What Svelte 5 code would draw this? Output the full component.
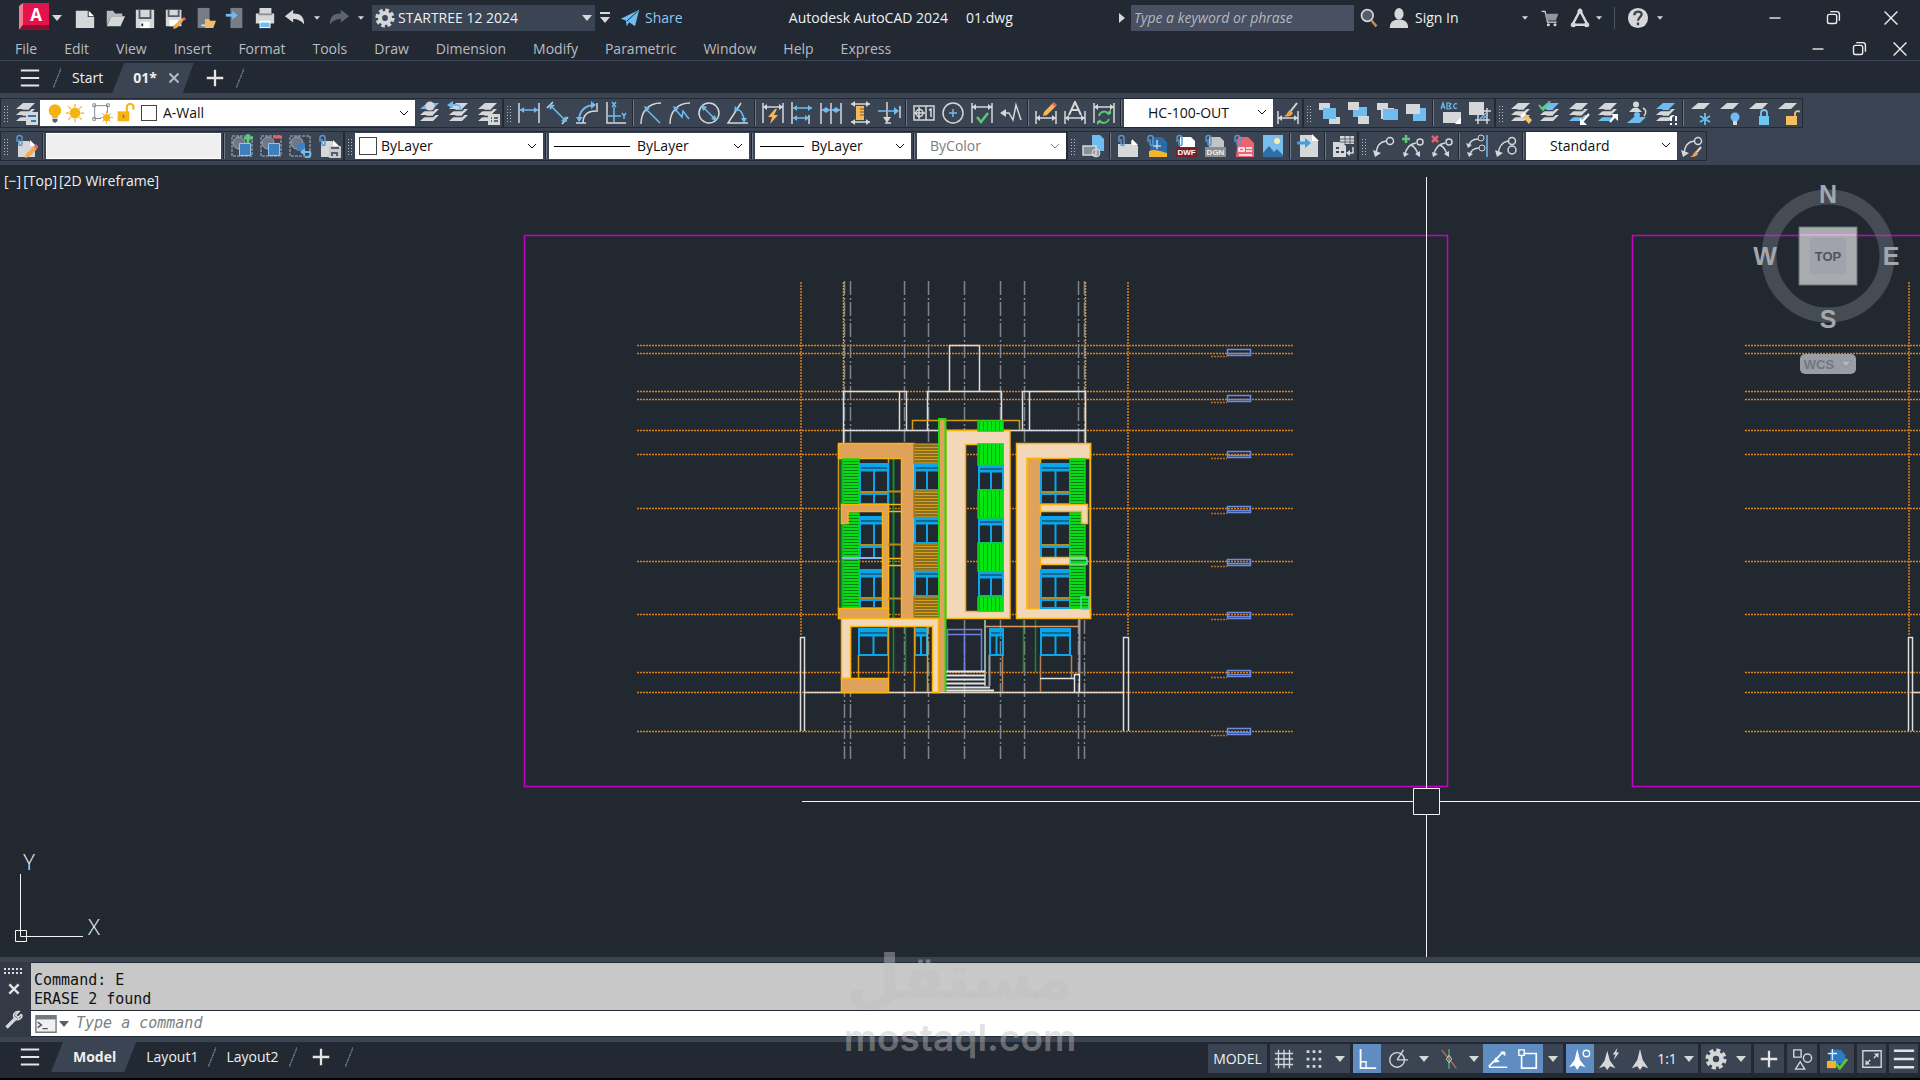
<script>
    const G = '#d6d7d9';
    const B = '#6fbcf0';
    const N = '#5cc878';

    const line = (d, c = G, w = 1.5) => `<path d="${d}" fill="none" stroke="${c}" stroke-width="${w}"/>`;
    const fill = (d, c = G) => `<path d="${d}" fill="${c}"/>`;
    const hArrow = (a, b, y, c = G) =>
        line(`M${a} ${y}H${b}`, c) + fill(`M${a} ${y}l4-3v6zM${b} ${y}l-4-3v6z`, c);
    const sheet = (y, c = G) => fill(`M9 ${y}h12l-6 6H2z`, c);
    const layers = (top = G, mid = G, low = G) => sheet(14, low) + line('M2 15.500h13l6-6', '#3b4453', 1.500) + sheet(8, mid) + line('M2 9.500h13l6-6', '#3b4453', 1.500) + sheet(2, top);
    const page = (c = G) => fill('M4 7h11l6 6v10H4z', c) + fill('M16 6v6h6z', '#fff');
    const clip = line('M3 8V4a2.5 2.5 0 015 0v6a1.500 1.500 0 01-3 0V5', '#5796cf', 1.5);
    const leader = line('M4 20C5 11 8 8 14 7', G, 1.500) + `<circle cx="18" cy="7" r="3.500" fill="none" stroke="${G}" stroke-width="1.500"/>` + fill('M1 16l2 7 6-4z');
    const doubleLeader = line('M4 21C5 14 8 10 15 9M17 21c-1-5-3-8-7-10', G) + `<circle cx="19" cy="8" r="3" fill="none" stroke="${G}" stroke-width="1.500"/>` + fill('M2 18l1 5 5-3zM14 20l5 3v-6z');
    const brush = line('M21 2l-7 9', G, 2) + fill('M14 9l3 3c-2 4-5 4-9 3 3-1 3-4 6-6z', '#eca24a');
    const pencil = fill('M19 2l3 3-9 9-4 1 1-4z', '#f7b952') + fill('M18 3l2-2 3 3-2 2z', '#e8606d');
    const dimFrame = line('M2 2v20M22 2v20') + hArrow(2, 22, 6);
    const dimLow = line('M2 10v13M22 10v13') + hArrow(2, 22, 17);
    const group = `<rect x="2" y="2" width="20" height="20" fill="none" stroke="#aeb4bd" stroke-dasharray="3 1"/><circle cx="9" cy="9" r="6" fill="#6d7889" stroke="#9ba6b5"/>`;
    const innerBlock = fill('M9 9h12v13H9z', '#3f7fbd') + line('M9.500 9.500h11v12h-11z', '#8cc8f2', 1);
    const boxes = (a, b, c) => fill('M2 2h11v7H2z', a) + fill('M6 7h13v11H6z', b) + (c ? fill('M12 16h11v7H12z', c) : '');

    const icons = {
        layerProps: layers() + fill('M12 11h12v13H12z') + line('M14 15h8M17 20h5', '#2f78b4', 2),
        makeCurrent: layers(B) + `<circle cx="12" cy="5" r="4.500" fill="${G}"/>`,
        layerPrev: layers() + line('M3 4h7c3 0 4 2 3 5', B, 2) + fill('M0 4l6-4v8z', B),
        layerStates: layers() + fill('M12 13h12v11H12z') + line('M15 17h1M18 17h4M15 20h1M18 20h4', '#3b4453'),
        dimLinear: line('M2 2v20M22 2v20') + hArrow(3, 21, 9, B),
        dimAligned: line('M1 7l6-6M16 23l6-7') + line('M5 5l14 14', B) + fill('M3 3l6 1-5 5zM21 21l-6-1 5-5z', B),
        dimArc: line('M1 22h10M22 2v9M8 22C8 14 13 10 21 10', G) + line('M4 20C4 10 10 4 20 4', B, 1.800) + fill('M1 16l3 5 4-5zM16 0l5 4-5 4z', B),
        dimOrdinate: line('M3 1v21h19', G) + line('M10 6v15M3 15h14', B) + line('M8 1l4 5M12 1l-4 5M18 12l2 3 2-3M20 15v3', B),
        dimRadius: line('M2 23C2 11 9 2 22 2', G) + line('M7 8l14 14', B, 1.500) + fill('M5 5l6 2-4 4z', B),
        dimJogged: line('M2 23C2 11 9 2 22 2', G) + line('M7 8l7 8 1-6 6 8', B, 1.500) + fill('M5 5l6 2-4 4z', B),
        dimDiameter: `<circle cx="12" cy="12" r="10" fill="none" stroke="${G}" stroke-width="1.500"/>` + line('M6 6l12 12', B) + fill('M4 4l6 2-4 4zM20 20l-6-2 4-4z', B),
        dimAngular: line('M15 2L2 22h20', G) + line('M10 8c6 1 8 6 8 13', B, 1.500) + fill('M9 5l4 4-5 2zM15 17h6l-3 5z', B),
        quickDim: dimFrame + fill('M14 8l-7 8h4l-2 7 8-9h-4l3-6z', '#f5b758'),
        dimBaseline: line('M2 1v22M19 14v9') + hArrow(3, 22, 7, B) + hArrow(3, 19, 17, B),
        dimContinue: line('M2 2v21M12 2v21M22 2v21') + hArrow(3, 11, 9, B) + hArrow(13, 21, 9, B),
        dimSpace: hArrow(3, 22, 3) + hArrow(3, 22, 21) + fill('M8 5h8v14H8z', '#f5b758') + line('M12 8h4M12 11h4M12 14h4', '#6d5737', 1),
        dimBreak: line('M10 1v17M8 22h6M23 5v12') + line('M1 10h20', B) + fill('M17 6l5 4-5 4z', B) + fill('M6 16h8l-4 6z'),
        tolerance: line('M2 5h20v14H2zM14 5v14M17 9l2-1v8M7 6v12M2 12h11') + '<circle cx="7.500" cy="12" r="3.500" fill="none" stroke="#d6d7d9" stroke-width="1.500"/>',
        centerMark: `<circle cx="12" cy="12" r="10" fill="none" stroke="${G}" stroke-width="1.500"/>` + line('M12 8v8M8 12h8', B),
        inspect: dimFrame + line('M7 16l4 5 7-9', N, 2.500),
        jogLine: line('M4 12h6l4 7 3-15 5 15', G) + fill('M1 12l6-4v8z'),
        dimEdit: dimLow + pencil,
        dimTextEdit: dimLow + line('M6 14l6-13 6 13M9 9h6', G, 2),
        dimUpdate: dimFrame + line('M7 15c1-5 8-6 10-1M17 18c-2 5-8 5-10 1', N, 1.800) + fill('M14 13h5v-5zM10 20H5v4z', N),
        dimStyle: dimLow + brush,
        toFront: boxes(G, B, G) + fill('M7 7h12v11H7z', B),
        toBack: fill('M7 6h14v10H7z', B) + fill('M2 1h11v8H2zM12 15h11v8H12z'),
        above: boxes(G, G) + fill('M8 8h15v11H8z', B),
        under: fill('M9 7h13v13H9z', B) + fill('M2 3h14v10H2z'),
        textFront: fill('M4 11h18v11H4z') + fill('M22 16v7h-6z', '#fff') + line('M2 8l2-6 2 6M3 6h3M8 2v6h2l2-1-2-2 2-2-2-1zM18 3c-4-2-5 6 0 4', B, 1.200),
        hatchBack: fill('M1 1h15v13H1z') + line('M10 23V10h13M7 19h15M19 7v16') + line('M12 18l6-6M15 18l3-3', B),
        layerMatch: layers() + fill('M12 14l3-3 8 8-3 4z', '#f3c376') + fill('M11 15l4-4 2 2-4 4z', '#fff'),
        layerCurrent: layers(B) + line('M1 4l4 5 7-9', N, 2),
        layerCopy: layers(G, G, B) + line('M22 13l-7 8', '#fff', 2) + fill('M13 17v7h7z', '#fff'),
        layerWalk: layers(G, G, B) + line('M14 21l6-7', '#fff', 2) + fill('M15 13h7v7z', '#fff'),
        layerIso: sheet(16, B) + `<circle cx="11" cy="3.500" r="3" fill="${G}"/><circle cx="12" cy="14" r="3" fill="${B}"/>` + fill('M4 11h13l-4-4H8z') + line('M18 7c4 2 3 6 1 8'),
        layerMerge: layers(B) + line('M17 15v5M22 15v5M17 22v2M22 22v2', '#fff', 2),
        layerFreeze: sheet(2) + line('M16 12v12M11 15l10 6M21 15l-10 6', B, 1.800),
        layerOff: sheet(2) + `<circle cx="17" cy="16" r="4.500" fill="${B}"/>` + fill('M15 20h4v4h-4z'),
        layerLock: sheet(2) + line('M14 16v-4a3 3 0 016 0v4', '#7ac8ee', 1.800) + fill('M12 15h10v9H12z', '#6cc6ee'),
        layerUnlock: sheet(2) + line('M19 16v-4a3 3 0 015-1', '#f0c178', 1.800) + fill('M10 15h11v9H10z', '#f5be62'),
        attEdit: page() + clip + fill('M20 12l3 3-8 8-4 1 1-4z', '#f3a950') + fill('M20 12l2-2 3 3-2 2z', '#e8606d'),
        groupAdd: group + innerBlock + line('M18 0v9M14 4h9', N, 3),
        groupRemove: group + innerBlock + line('M14 3h9', '#e8606d', 3),
        groupEdit: group + fill('M9 9h8v8H9z', '#3f7fbd') + line('M15 18h7c2 6-3 6-5 5', B, 2) + fill('M12 18l5-4v8z', B),
        groupSave: page() + clip + fill('M12 12h12v12H12z', '#c7c9cc') + line('M14 14h8M15 22v-3h5v3', '#55606f', 2),
        insertBlock: fill('M11 1h8l4 4v12H11z', B) + fill('M2 12h13v9H2z', '#8b9098') + `<circle cx="15" cy="19" r="4" fill="#9aa0a8" stroke="${G}"/>` + line('M2 12h13v9H2z'),
        attach: fill('M2 10h13v-4l7 6v11H2z') + fill('M16 5v6h6z', '#fff') + clip,
        attachImg: fill('M7 3h10l5 5v15H4z', '#2c6ba6') + fill('M4 17c7-3 13 1 18 2v4H4z', '#f4b52b') + line('M8 12h8M12 6v9', '#b8d7ef') + clip,
        attachDwf: fill('M6 3h11l4 4v7H6z', '#fff') + fill('M2 13h21v10H2z', '#7c1d2c') + '<text x="12.500" y="21" font-size="8" font-weight="700" font-family="Liberation Sans, sans-serif" text-anchor="middle" fill="#fff">DWF</text>' + clip,
        attachDgn: fill('M6 3h11l4 4v7H6z', '#c2c4c6') + fill('M2 13h21v10H2z', '#8b8f93') + '<text x="12.500" y="21" font-size="8" font-weight="700" font-family="Liberation Sans, sans-serif" text-anchor="middle" fill="#eee">DGN</text>' + clip,
        attachPdf: fill('M6 3h10l6 6v14H4z', '#ea6370') + line('M7 14h5v3H7zM14 14h6M14 17h6M7 21h13', '#fff') + clip,
        picture: fill('M2 1h20v22H2z', '#79bdea') + fill('M2 19l6-7 5 6 3-3 6 6v2H2z', '#2f6ea6') + '<circle cx="16" cy="7" r="3" fill="#f6eeb0"/>',
        importFile: fill('M4 1h12l6 6v16H4z') + fill('M16 0v7h7z', '#fff') + line('M1 9h9', '#3e9fe3', 3) + fill('M9 4l6 5-6 5z', '#3e9fe3'),
        extract: fill('M2 8h9l4 4v11H2z') + fill('M9 2h14v8H9z') + line('M9 5h14M9 8h14M14 2v8M19 2v8', '#5a6270', 1) + line('M5 14h3M5 18h3M10 18h3', '#3b4453', 2) + line('M22 13v6h-5') + fill('M15 19l4-3v6z'),
        leader,
        leaderAdd: doubleLeader + line('M5 1v8M1 5h8', N, 2.500),
        leaderRemove: doubleLeader + line('M2 2l6 6M8 2l-6 6', '#e8606d', 2.500),
        leaderAlign: line('M4 12c1-5 4-7 9-7M5 21c1-5 4-7 9-7') + '<circle cx="16" cy="4" r="3" fill="none" stroke="#d6d7d9"/><circle cx="17" cy="14" r="3" fill="none" stroke="#d6d7d9"/>' + fill('M1 9l2 5 4-3zM2 18l2 5 4-3z') + line('M22 1v22', B),
        leaderCollect: line('M4 20c1-8 4-12 10-13') + '<circle cx="18" cy="7" r="3.500" fill="none" stroke="#d6d7d9" stroke-width="1.500"/><circle cx="18" cy="16" r="4" fill="none" stroke="#d6d7d9" stroke-width="1.500"/>' + fill('M1 16l2 7 6-4z'),
        leaderStyle: leader + line('M21 13l-5 6', G, 2) + fill('M16 17l2 3c-2 3-5 3-8 3 3-1 3-4 6-6z', '#eca24a'),
        newFile: fill('M2 4h13v7h7v12H2z') + fill('M16 4l6 6h-6z', '#fff'),
        open: fill('M3 4h7l2 3h8v3H8L3 20z', '#b8babc') + fill('M8 10h15l-5 11H3z'),
        save: fill('M2 3h20v20H2z') + line('M6 3v9h12V3', '#555d69', 2) + fill('M7 16h10v7H7z', '#fff') + line('M9 18v3', '#222933', 2),
        saveAs: fill('M2 3h17v18H2z') + line('M5 3v7h11V3', '#555d69', 2) + fill('M6 14h9v7H6z', '#fff') + fill('M20 12l2 2-8 9-4 1 1-4z', '#f3a950') + fill('M20 12l2-1 2 2-2 2z', '#e8606d'),
        webOpen: fill('M4 1h13v22H4z', '#777d85') + line('M8 20h4', '#ddd', 2) + fill('M12 13h4l2 2h6l-3 8h-9z', '#f0bc68'),
        webSave: fill('M7 1h13v22H7z', '#777d85') + line('M2 9h9', B, 3) + fill('M9 4l6 5-6 5z', B),
        print: fill('M6 1h13v6h3v11H2V7h4z') + line('M5 8h15', '#8b9096', 2) + fill('M6 15h12v8H6z', '#fff') + fill('M7 17h10v5H7z', B),
        undo: fill('M1 10l9-7v4c8 0 12 3 12 12-3-4-7-6-12-6v4z'),
        redo: fill('M23 10l-9-7v4C6 7 2 10 2 19c3-4 7-6 12-6v4z', '#5d646e'),
        gear: '<circle cx="12" cy="12" r="6" fill="none" stroke="#d6d7d9" stroke-width="5"/><circle cx="12" cy="12" r="9.500" fill="none" stroke="#d6d7d9" stroke-width="4" stroke-dasharray="4.400 3.060"/>',
        share: fill('M1 13L23 2l-5 20-7-5-3 5-1-7z', B) + line('M8 16L21 4', '#222933', 1.200),
        search: '<circle cx="10" cy="9" r="7" fill="#565e6b" stroke="#d6d7d9" stroke-width="2"/>' + line('M15 15l6 7', '#c98b54', 3),
        user: '<ellipse cx="12" cy="7.500" rx="5" ry="6.500" fill="#d6d7d9"/>' + fill('M2 23c0-7 4-8 7-9h6c3 1 7 2 7 9z'),
        cart: line('M2 4h4l3 13h11', G, 1.500) + fill('M6 7h16l-3 8H8z', '#8f959d') + '<circle cx="10" cy="20" r="1.800" fill="#d6d7d9"/><circle cx="18" cy="20" r="1.800" fill="#d6d7d9"/>',
        apps: line('M12 3L3 20h18z', G, 3) + '<circle cx="12" cy="4" r="3" fill="#d6d7d9"/><circle cx="4" cy="20" r="3" fill="#d6d7d9"/><circle cx="20" cy="20" r="3" fill="#d6d7d9"/>',
        help: '<circle cx="12" cy="12" r="11" fill="#d6d7d9"/>' + line('M8 9c0-5 8-5 8-1 0 3-4 3-4 7M12 17v3', '#3a424e', 2.500),
        min: line('M6 12h12', '#eee'),
        restore: '<rect x="6" y="8" width="10" height="10" rx="2" fill="none" stroke="#eee" stroke-width="1.500"/>' + line('M9 5h7c2 0 3 1 3 3v7', '#eee'),
        close: line('M5 5l14 14M19 5L5 19', '#eee'),
        menu: line('M1 3h22M1 12h22M1 21h22', '#e4e4e4', 2.500),
        plus: line('M12 3v18M3 12h18', '#e4e4e4', 2.500),
        bulb: '<circle cx="12" cy="9" r="7.500" fill="#f6b414"/>' + fill('M8 14h8l-1 4H9z', '#f6b414') + fill('M9 19h6v3l-3 2-3-2z', '#596170'),
        sun: '<circle cx="12" cy="12" r="6.500" fill="#f6b414"/>' + line('M12 1v4M12 19v4M1 12h4M19 12h4M4 4l3 3M17 17l3 3M20 4l-3 3M7 17l-3 3', '#f6b414', 1.500),
        vpFreeze: line('M4 4h14v8M4 4v14h7M2 2h3v3H2zM17 2h3v3h-3zM2 17h3v3H2z', '#7c828a', 1) + '<circle cx="17" cy="17" r="4" fill="#f6b414"/>' + line('M17 10v14M10 17h14M12 12l10 10M22 12L12 22', '#f6b414', 1),
        unlock: line('M13 11V5a4 4 0 018 0v3', '#f6b414', 2.500) + fill('M2 10h14v12H2z', '#f6b414') + line('M9 14v4', '#a97400', 2),
        grid: line('M6 2v20M12 2v20M18 2v20M2 6h20M2 12h20M2 18h20', G),
        snap: line('M4 4h16M4 12h16M4 20h16', G, 3).replace('/>', ' stroke-dasharray="3 3.500"/>'),
        ortho: line('M5 1v21h17', '#fff', 2) + line('M5 15h6v7', '#fff'),
        polar: '<circle cx="11" cy="13" r="8" fill="none" stroke="#d6d7d9" stroke-width="1.500"/>' + line('M11 13h12M11 13l7-11'),
        iso: line('M4 2l16 20', '#c26d54') + line('M12 1v22', '#52ad68') + line('M12 8l-3 4 3 4 3-4z', G, 1),
        otrack: line('M2 21h20M2 20L18 4', '#fff', 1.800) + fill('M9 10l5 5-6 1zM14 4h6v5z', '#fff'),
        osnap: line('M7 6h14v16H5V8', '#fff', 1.800) + line('M2 2h6v6H2z', '#fff'),
        annoVis: fill('M9 1l3 12 6 8-6-2-3 5-3-5-6 2 6-8z', '#fff') + '<circle cx="19" cy="6" r="3.500" fill="none" stroke="#fff" stroke-width="1.500"/>',
        annoAuto: fill('M9 3l3 11 6 8-6-2-3 4-3-4-6 2 6-8z') + fill('M20 0l-5 7h3l-2 6 6-8h-3z'),
        anno: fill('M12 1l3 12 6 9-6-2-3 4-3-4-6 2 6-9z'),
        isolate: line('M3 2h8v8H3zM10 15l5 8H5z') + '<circle cx="18" cy="11" r="4.500" fill="none" stroke="#d6d7d9" stroke-width="1.500"/>',
        hardware: fill('M5 2h11l5 6v9H4z', '#2e7cc0') + fill('M1 14h10v8H1z', '#f2b134') + line('M7 1v12M2 6h10', '#d9ecfa') + line('M11 17l4 5 8-10', '#5cc83f', 3),
        cleanScreen: line('M2 3h20v18H2zM5 18l5-5M14 11l5-5') + fill('M5 13v5h5zM14 6h5v5z'),
        wrench: line('M3 21L15 9', G, 4) + line('M21 5l-4 4-3-3 4-4c-6-1-8 5-5 8s10 1 8-5', G, 2),
        cmdX: line('M4 4l16 16M20 4L4 20', '#e4e4e4', 4),
        prompt: fill('M1 3h22v18H1z', '#f0f0f0') + line('M1 3h22v18H1z', '#75797e', 1.500) + fill('M1 3h22v4H1z', '#75797e') + line('M3 10l4 3-4 3M8 17h6', '#55595e'),
    };

    const menus = ['File', 'Edit', 'View', 'Insert', 'Format', 'Tools', 'Draw', 'Dimension', 'Modify', 'Parametric', 'Window', 'Help', 'Express'];

    // '|' is a separator, objects are combo boxes
    const rows = [
        [
            ['layerProps', { value: 'A-Wall', width: 375, kind: 'layer' }, 'makeCurrent', 'layerPrev', 'layerStates'],
            ['dimLinear', 'dimAligned', 'dimArc', 'dimOrdinate', '|', 'dimRadius', 'dimJogged', 'dimDiameter', 'dimAngular', '|', 'quickDim', 'dimBaseline', 'dimContinue', 'dimSpace', 'dimBreak', '|', 'tolerance', 'centerMark', 'inspect', 'jogLine', '|', 'dimEdit', 'dimTextEdit', 'dimUpdate', '|', { value: 'HC-100-OUT', width: 149, kind: 'style' }, 'dimStyle'],
            ['toFront', 'toBack', 'above', 'under', '|', 'textFront', 'hatchBack'],
            ['layerMatch', 'layerCurrent', 'layerCopy', 'layerWalk', 'layerIso', 'layerMerge', '|', 'layerFreeze', 'layerOff', 'layerLock', 'layerUnlock'],
        ],
        [
            ['attEdit', '|', { value: '', width: 175, kind: 'text' }, '|', 'groupAdd', 'groupRemove', 'groupEdit', 'groupSave'],
            [{ value: 'ByLayer', width: 188, kind: 'color' }, '|', { value: 'ByLayer', width: 200, kind: 'line', sample: 76 }, '|', { value: 'ByLayer', width: 156, kind: 'line', sample: 44 }, '|', { value: 'ByColor', width: 149, kind: 'plot' }],
            ['insertBlock', '|', 'attach', 'attachImg', 'attachDwf', 'attachDgn', 'attachPdf', 'picture', '|', 'importFile', '|', 'extract'],
            ['leader', 'leaderAdd', 'leaderRemove', '|', 'leaderAlign', 'leaderCollect', '|', { value: 'Standard', width: 151, kind: 'style' }, 'leaderStyle'],
        ],
    ];

    const status = [
        [{ text: 'MODEL', w: 59 }],
        [{ icon: 'grid', w: 28 }, { icon: 'snap', w: 32 }, { arrow: true, w: 20 }],
        [{ icon: 'ortho', w: 28, on: true }, { icon: 'polar', w: 34 }, { arrow: true, w: 18 }, { icon: 'iso', w: 32 }, { arrow: true, w: 18 }, { icon: 'otrack', w: 30, on: true }, { icon: 'osnap', w: 30, on: true }, { arrow: true, w: 20 }],
        [{ icon: 'annoVis', w: 28, on: true }, { icon: 'annoAuto', w: 32 }, { icon: 'anno', w: 28 }, { text: '1:1', w: 26 }, { arrow: true, w: 18 }],
        [{ icon: 'gear', w: 30 }, { arrow: true, w: 20 }],
        [{ icon: 'plus', w: 30 }],
        [{ icon: 'isolate', w: 30 }],
        [{ icon: 'hardware', w: 34 }],
        [{ icon: 'cleanScreen', w: 29 }],
        [{ icon: 'menu', w: 29 }],
    ];

    const levels = [345.5, 353.5, 391.5, 399.5, 430.5, 454.5, 508.5, 561.5, 614.5, 672.5, 692.5, 731.5];
    const marks = [349, 395, 451, 506, 559, 612, 670, 728];
    const axes = [844.5, 850.5, 904.5, 928.5, 964.5, 1000.5, 1024.5, 1078.5, 1084.5];
    const windows = [
        [860, 464, 28, 40], [860, 517, 28, 41], [860, 570, 28, 38],
        [915, 464, 24, 26], [915, 517, 24, 26], [915, 570, 24, 26],
        [979, 465, 24, 25], [979, 518, 24, 25], [979, 571, 24, 25],
        [1041, 464, 29, 40], [1041, 517, 29, 41], [1041, 570, 29, 38],
        [859, 629, 29, 26], [915, 629, 12, 26], [990, 629, 13, 26], [1041, 629, 29, 26],
    ];
    const hatches = [
        [843, 459, 16, 46, 'louver'], [843, 513, 16, 95, 'louver'],
        [1070, 459, 15, 46, 'louver'], [1070, 513, 15, 95, 'louver'],
        [914, 444, 25, 19, 'brick'], [914, 491, 25, 26, 'brick'], [914, 544, 25, 26, 'brick'], [914, 597, 25, 21, 'brick'],
        [978, 421, 25, 10, 'fin'], [978, 444, 25, 21, 'fin'], [978, 490, 25, 28, 'fin'], [978, 543, 25, 28, 'fin'], [978, 597, 25, 14, 'fin'],
    ];

    let command = $state('');
    let search = $state('');
</script>

{#snippet icon(name, size = 24)}
    <svg width={size} height={size} viewBox="0 0 24 24" aria-hidden="true">{@html icons[name]}</svg>
{/snippet}

{#snippet arrow()}
    <svg width="10" height="6" viewBox="0 0 10 6" aria-hidden="true"><path d="M0 0h10L5 6z" fill="#d6d7d9" /></svg>
{/snippet}

{#snippet combo(c)}
    {#if c.kind === 'text'}
        <input class="group-name" style="width: {c.width}px" aria-label="Group name" />
    {:else}
        <span class="combo {c.kind}" style="width: {c.width}px">
            {#if c.kind === 'layer'}
                {@render icon('bulb', 20)}{@render icon('sun', 20)}
                <span class="vp">{@render icon('vpFreeze', 22)}</span>{@render icon('unlock', 20)}
            {/if}
            {#if c.kind === 'layer' || c.kind === 'color'}<span class="swatch"></span>{/if}
            {#if c.kind === 'line'}<span class="sample" style="width: {c.sample}px"></span>{/if}
            <select aria-label={c.value} disabled={c.kind === 'plot'}>
                <option>{c.value}</option>
            </select>
            <svg class="chevron" width="10" height="6" viewBox="0 0 10 6"><path d="M1 1l4 4 4-4" fill="none" stroke="currentColor" /></svg>
        </span>
    {/if}
{/snippet}

<div class="app">
    <header class="title-bar">
        <div class="quick">
            <button class="logo" aria-label="AutoCAD">
                <svg width="30" height="29" viewBox="0 0 30 29">
                    <path d="M0 3l4-3v22l-4 5z" fill="#f0808f" />
                    <path d="M4 0h26v23H4z" fill="#e5134b" />
                    <path d="M4 22h26v5H0z" fill="#8e0d2d" />
                    <text x="17" y="18" text-anchor="middle" font-size="17" font-weight="700" fill="#fff">A</text>
                </svg>
            </button>
            <button class="drop" aria-label="Application menu">{@render arrow()}</button>
            <span class="spacer"></span>
            {#each ['newFile', 'open', 'save', 'saveAs', 'webOpen', 'webSave', 'print', 'undo'] as name}
                <button class="tb" aria-label={name}>{@render icon(name, 22)}</button>
            {/each}
            <button class="drop small" aria-label="Undo list">{@render arrow()}</button>
            <button class="tb" aria-label="redo">{@render icon('redo', 22)}</button>
            <button class="drop small" aria-label="Redo list">{@render arrow()}</button>
            <label class="workspace">
                {@render icon('gear', 20)}
                <select aria-label="Workspace"><option>STARTREE 12 2024</option></select>
                {@render arrow()}
            </label>
            <button class="customize" aria-label="Customize"><svg width="10" height="11" viewBox="0 0 10 11"><path d="M0 0h10v2H0zM0 5h10l-5 6z" fill="#d6d7d9" /></svg></button>
            <button class="share">{@render icon('share', 20)}<span>Share</span></button>
        </div>
        <div class="doc-title"><span>Autodesk AutoCAD 2024</span><span>01.dwg</span></div>
        <div class="info">
            <svg class="expand" width="6" height="10" viewBox="0 0 6 10"><path d="M0 0l6 5-6 5z" fill="#d6d7d9" /></svg>
            <input class="search" placeholder="Type a keyword or phrase" aria-label="Search" bind:value={search} />
            <button class="tb" aria-label="Search">{@render icon('search', 20)}</button>
            <button class="signin">{@render icon('user', 22)}<span>Sign In</span></button>
            <button class="drop small" aria-label="Account">{@render arrow()}</button>
            <button class="tb cart" aria-label="Cart">{@render icon('cart', 20)}</button>
            <button class="tb apps" aria-label="Apps">{@render icon('apps', 20)}</button>
            <button class="drop small" aria-label="Apps list">{@render arrow()}</button>
            <span class="rule"></span>
            <button class="tb" aria-label="Help">{@render icon('help', 22)}</button>
            <button class="drop small" aria-label="Help list">{@render arrow()}</button>
            <div class="win">
                {#each ['min', 'restore', 'close'] as name}
                    <button aria-label={name}>{@render icon(name, 22)}</button>
                {/each}
            </div>
        </div>
    </header>

    <nav class="menu-bar">
        {#each menus as m}
            <button>{m}</button>
        {/each}
        <div class="doc-win">
            {#each ['min', 'restore', 'close'] as name}
                <button aria-label={name}>{@render icon(name, 22)}</button>
            {/each}
        </div>
    </nav>

    <div class="file-tabs">
        <button class="burger" aria-label="File tabs">{@render icon('menu', 20)}</button>
        <span class="slash"></span>
        <button class="tab">Start</button>
        <div class="tab current">
            <button>01*</button>
            <button class="x" aria-label="Close drawing"><svg width="12" height="12" viewBox="0 0 24 24">{@html line('M3 3l18 18M21 3L3 21', '#b5bac1', 4)}</svg></button>
        </div>
        <button class="add" aria-label="New drawing">{@render icon('plus', 22)}</button>
        <span class="slash"></span>
    </div>

    <div class="toolbars">
        {#each rows as row}
            <div class="row">
                {#each row as panel}
                    <div class="panel" role="toolbar">
                        <span class="grip"></span>
                        {#each panel as item}
                            {#if item === '|'}
                                <span class="sep"></span>
                            {:else if typeof item === 'string'}
                                <button class="tool" aria-label={item}>{@render icon(item)}</button>
                            {:else}
                                {@render combo(item)}
                            {/if}
                        {/each}
                    </div>
                {/each}
            </div>
        {/each}
    </div>

    <main class="canvas">
        <div class="view-label"><button>[−]</button><button>[Top]</button><button>[2D Wireframe]</button></div>
        <svg class="drawing" width="100%" height="100%" aria-label="Elevation drawing">
            <defs>
                <pattern id="louver" width="16" height="3" patternUnits="userSpaceOnUse">
                    <rect width="16" height="3" fill="#0a7a1c" /><rect width="16" height="2" fill="#08dc16" />
                </pattern>
                <pattern id="fin" width="4" height="12" patternUnits="userSpaceOnUse">
                    <rect width="4" height="12" fill="#0ba41a" /><rect width="3" height="12" fill="#06e612" />
                </pattern>
                <pattern id="brick" width="12" height="3" patternUnits="userSpaceOnUse">
                    <rect width="12" height="3" fill="#8a6d22" /><rect width="12" height="1" fill="#d9a010" />
                </pattern>
            </defs>
            <g transform="translate(0 -165)">
                <g id="elevation" fill="none" stroke-width="1.5">
                    <rect x="524.5" y="235.5" width="923" height="551" stroke="#c500c5" />
                    <g stroke="#e07f16" stroke-dasharray="2 1">
                        {#each levels as y}
                            <path d="M637 {y}H1293" />
                        {/each}
                        <path d="M801 282V635M1128 282V635" />
                    </g>
                    {#each marks as y}
                        <path d="M1211 {y + 7}.5h16" stroke="#b96c1c" stroke-dasharray="2 1" />
                        <path d="M1227.500 {y}.5h23v6h-23zM1227 {y + 4}.5h24" stroke="#6a8be0" />
                    {/each}
                    <g stroke="#80848a" stroke-dasharray="14 3 2 2">
                        {#each axes as x}
                            <path d="M{x} 281V443M{x} 620V759" />
                        {/each}
                    </g>
                    <path d="M843.500 282V391M1085.500 282V443" stroke="#d99a22" stroke-dasharray="2 1" />

                    <g stroke="#dcdcdc">
                        <path d="M949.500 391V345.500h30V391M843.500 443V391.500h63v39M899.500 391v39M927.500 430V391.500h74V430M1022.500 430V391.500h63V443M1029.500 391v39M843 430.500h243" />
                        <path d="M805 692.500H1123" stroke="#e8d6c4" />
                        <path d="M800.500 731V637.500h4V731M1123.500 731V637.500h5V731" />
                    </g>
                    <path d="M912.500 430V420.500h107V430" stroke="#d69c12" />

                    <!-- left block -->
                    <path d="M838.500 443.500V609M888.500 459V504" stroke="#d69c12" />
                    <path d="M893.500 459V618M841.500 459V609" stroke="#178a2a" stroke-width="2" />
                    <path d="M838.500 443.500H914.500V618.500H901.500V458.500H838.500z" fill="#e0a15a" stroke="#fbb40c" />
                    <path d="M1041 458h49V609h-49" stroke="#d79b16" />

                    <!-- centre block -->
                    <path d="M946 430.500h64v188h-64zM965.500 444.500v167h37.500v-167z" fill="#f2d8b8" fill-rule="evenodd" stroke="#fbb40c" />
                    <!-- right block -->
                    <path d="M1016.500 443.500h74v15H1027v150h63.500v10h-74z" fill="#f2d8b8" stroke="#fbb40c" />
                    <path d="M1027.500 458.500h13v150h-13z" fill="#e0a15a" stroke="#fbb40c" />

                    {#each windows as [x, y, w, h]}
                        <g stroke="#0aa5ea">
                            <rect {x} {y} width={w} height={h} stroke-width="2" />
                            <path d="M{x} {y + 2}h{w}M{x} {y + 6}h{w}" stroke-width="3" />
                            <path d="M{x + w / 2} {y + 7}v{h - 7}" stroke-width="2" />
                            {#if h > 30}<path d="M{x} {y + 30}h{w}" stroke-width="2" />{/if}
                        </g>
                        {#if h > 30}
                            <path d="M{x} {y + 28}h{w}" stroke="#b98a16" stroke-width="2" />
                        {/if}
                    {/each}
                    {#each hatches as [x, y, w, h, p]}
                        <rect {x} {y} width={w} height={h} fill="url(#{p})" stroke={p === 'brick' ? '#a5811c' : '#0cd41a'} />
                    {/each}

                    <g fill="#e0a15a" stroke="#fbb40c">
                        <path d="M841.500 504.500h47v104h-6v-97h-34.500v12h-6.500z" />
                        <path d="M838.500 608.500h50v10h-50z" />
                        <path d="M888 504.500h13M888 511.500h13M888 558.500h13M888 565.500h13" />
                    </g>
                    <path d="M842 558h40" stroke="#8db6e8" stroke-width="2" />
                    <path d="M888 491.500h13M888 544.500h13M888 598.500h13" stroke="#b98a16" stroke-width="2" />
                    <g fill="#f2d8b8" stroke="#fbb40c">
                        <path d="M1040.500 504.500h47v19h-6v-12h-41z" />
                        <path d="M1040.500 557.500h46v7h-46z" />
                    </g>
                    <path d="M1070 559h17v5h-17zM1081 597h8v12h-8z" fill="url(#louver)" stroke="#4ae0a0" />
                    <path d="M1090.500 443V618.500" stroke="#fbb40c" />

                    <!-- ground floor -->
                    <path d="M858.500 655V678M888.500 655V678M914.500 618V692M927.500 618V692M888.500 626V655" stroke="#d69c12" />
                    <path d="M893.500 626V672M905.500 626V672M1023.500 620V672M1035.500 620V672" stroke="#178a2a" />
                    <path d="M989.500 655V686M1079.500 619V674" stroke="#9b9ea3" stroke-width="2" />
                    <path d="M985 620V686" stroke="#86ab96" stroke-width="2" />
                    <path d="M1002.500 655V692M1040.500 655V692M1071.500 655V678" stroke="#b98058" />
                    <path d="M985 626.500h94" stroke="#e2965c" />
                    <path d="M947.500 672V629.500h34V672M947 634.500h34M964.500 634V672" stroke="#6f7fe0" />
                    <path d="M945 671.500h40M945 675.500h40M945 679.500h40M945 683.500h40M945 687.500h45M945 690.500h49" stroke="#e4e4e4" stroke-width="2" />
                    <path d="M1040 678.500h34M1074.500 692V674.500h5V692" stroke="#e4e4e4" />
                    <path d="M841.500 618.500h97v74h-6v-66h-82v52h-9z" fill="#f2d8b8" stroke="#fbb40c" />
                    <path d="M841.500 678.500h47v14h-47z" fill="#e0a15a" stroke="#fbb40c" />
                    <path d="M939 419h6.500v273H939z" fill="#e0a15a" />
                    <path d="M939 618V419h6.500V692" stroke="#1ddd12" stroke-width="2" />
                </g>
                <use href="#elevation" x="1108" />

                <!-- crosshair -->
                <path d="M1426.500 177V788M1426.500 814V957M802 801.500H1413M1440 801.500H4000M1413.500 788.500h26v26h-26z" fill="none" stroke="#f2f2f2" />

                <!-- UCS -->
                <path d="M20.500 874V936.500H83M15.500 930.500h11v11h-11z" fill="none" stroke="#f2f2f2" />
                <text x="29" y="870" class="ucs">Y</text>
                <text x="94" y="935" class="ucs">X</text>
            </g>
        </svg>
        <div class="cube">
            <svg width="150" height="150" viewBox="0 0 150 150">
                <circle cx="75" cy="75" r="59" fill="none" stroke="#7b828a" stroke-opacity=".4" stroke-width="15" />
                <rect x="46" y="46" width="58" height="58" fill="#a9acaf" stroke="#6d7176" />
                <path d="M47 54h56" stroke="#dba9dc" stroke-width="2" />
                <rect x="57" y="57" width="36" height="36" fill="#a0a3ab" />
                <text x="75" y="80" class="face">TOP</text>
                <text x="75" y="22" class="dir">N</text>
                <text x="75" y="147" class="dir">S</text>
                <text x="12" y="84" class="dir">W</text>
                <text x="138" y="84" class="dir">E</text>
            </svg>
            <button class="wcs">WCS <svg width="12" height="8" viewBox="0 0 12 8"><path d="M1 1h10L6 7z" fill="#b5b8be" stroke="#8e929a" /></svg></button>
        </div>
    </main>

    <section class="command">
        <div class="handle">
            <span class="dots"></span>
            <button aria-label="Close command line">{@render icon('cmdX', 14)}</button>
            <button aria-label="Customize">{@render icon('wrench', 20)}</button>
        </div>
        <div class="lines">
            <pre>Command: E
ERASE 2 found</pre>
            <div class="prompt">
                {@render icon('prompt', 22)}
                <svg width="10" height="6" viewBox="0 0 10 6"><path d="M0 0h10L5 6z" fill="#5b6068" /></svg>
                <input placeholder="Type a command" aria-label="Command" bind:value={command} />
            </div>
        </div>
        <div class="watermark" aria-hidden="true">
            <span class="ar" lang="ar">مستقل</span>
            <span class="en">mostaql.com</span>
        </div>
    </section>

    <footer class="status-bar">
        <button class="burger" aria-label="Layouts">{@render icon('menu', 20)}</button>
        <button class="layout current">Model</button>
        <button class="layout">Layout1</button>
        <span class="slash"></span>
        <button class="layout">Layout2</button>
        <span class="slash"></span>
        <button class="add" aria-label="New layout">{@render icon('plus', 22)}</button>
        <span class="slash"></span>
        <div class="toggles">
            {#each status as group}
                <div class="cluster">
                    {#each group as s}
                        <button class:on={s.on} style="width: {s.w}px" aria-label={s.icon ?? s.text ?? 'More'}>
                            {#if s.icon}{@render icon(s.icon, 22)}{:else if s.arrow}{@render arrow()}{:else}{s.text}{/if}
                        </button>
                    {/each}
                </div>
            {/each}
        </div>
    </footer>
</div>

<style>
    :global(body) {
        background: #000;
    }

    .app {
        display: flex;
        flex-direction: column;
        height: 100vh;
        overflow: hidden;
        background: #222933;
        color: #f0f0f0;
        font: 14px/20px "Open Sans", "Noto Sans", sans-serif;
    }

    button, select, input {
        font: inherit;
        color: inherit;
        background: none;
        border: 0;
        padding: 0;
        margin: 0;
        box-sizing: border-box;
        border-radius: 0;
    }

    button {
        display: flex;
        align-items: center;
        justify-content: center;
        flex: none;
        white-space: nowrap;
    }

    select {
        appearance: none;
        flex: 1;
        min-width: 0;
        outline: 0;
        opacity: 1;
    }

    svg {
        flex: none;
        display: block;
    }

    /* title bar */
    .title-bar {
        display: flex;
        justify-content: space-between;
        align-items: center;
        height: 35px;
        flex: none;
        padding-left: 19px;
    }

    .quick, .info, .doc-title, .win {
        display: flex;
        align-items: center;
    }

    .tb {
        width: 30px;
        height: 30px;
    }

    .drop {
        width: 16px;
        height: 24px;
    }

    .small {
        width: 14px;
    }

    .small svg {
        width: 6px;
    }

    .spacer {
        width: 5px;
    }

    .workspace {
        display: flex;
        align-items: center;
        width: 223px;
        height: 26px;
        margin-left: 4px;
        padding: 0 3px;
        gap: 3px;
        box-sizing: border-box;
        background: #3b4453;
    }

    .customize {
        width: 20px;
        height: 24px;
    }

    .share {
        gap: 5px;
        margin-left: 5px;
        color: #8cc8f2;
    }

    .doc-title {
        gap: 18px;
        white-space: nowrap;
    }

    .search {
        width: 223px;
        height: 26px;
        margin-left: 6px;
        padding: 0 3px;
        background: #485062;
    }

    .search::placeholder {
        color: #b4b8bf;
        font-style: italic;
        opacity: 1;
    }

    .signin {
        width: 134px;
        padding-left: 4px;
        gap: 5px;
        justify-content: flex-start;
    }

    .cart {
        width: 36px;
    }

    .apps {
        width: 24px;
    }

    .rule {
        width: 1px;
        height: 22px;
        margin: 0 8px;
        background: #4b5462;
    }

    .win {
        margin-left: 79px;
    }

    .win button {
        width: 58px;
        height: 30px;
    }

    /* menu bar */
    .menu-bar {
        display: flex;
        align-items: center;
        gap: 1px;
        height: 26px;
        box-sizing: border-box;
        flex: none;
        padding: 2px 0 0 2px;
        border-bottom: 1px solid #3b4453;
        color: #b9bcc1;
    }

    .menu-bar > button {
        padding: 0 13px;
    }

    .doc-win {
        display: flex;
        margin-left: auto;
    }

    .doc-win button {
        width: 41px;
    }

    /* file tabs */
    .file-tabs, .status-bar {
        display: flex;
        align-items: center;
        flex: none;
    }

    .file-tabs {
        height: 32px;
        box-sizing: border-box;
        padding-top: 2px;
    }

    .burger {
        width: 30px;
        margin-left: 15px;
    }

    .slash {
        width: 8px;
        height: 20px;
        background: linear-gradient(112deg, transparent 46%, #566070 46%, #566070 56%, transparent 56%);
    }

    .file-tabs > .slash {
        margin-left: 8px;
    }

    .file-tabs > .slash:last-child {
        margin-left: 0;
    }

    .tab {
        padding: 0 9px 0 11px;
    }

    .tab.current {
        display: flex;
        align-items: center;
        height: 30px;
        align-self: flex-end;
        padding: 0 14px 0 21px;
        gap: 11px;
        font-weight: 700;
        background: #3b4453;
        clip-path: polygon(12px 0, 100% 0, calc(100% - 11px) 100%, 0 100%);
    }

    .add {
        width: 42px;
    }

    /* toolbars */
    .toolbars {
        display: flex;
        flex-direction: column;
        gap: 3px;
        padding: 5px 0 4px;
        flex: none;
        background: #3b4453;
    }

    .row {
        display: flex;
    }

    .panel {
        display: flex;
        align-items: center;
        height: 30px;
        box-sizing: border-box;
        border: 1px solid #232a34;
    }

    .grip {
        width: 10px;
        height: 18px;
        background: repeating-linear-gradient(#3b4453 0 2px, transparent 2px 3px), linear-gradient(90deg, transparent 3px, #b6bbc4 3px 4px, transparent 4px 6px, #b6bbc4 6px 7px, transparent 7px);
    }

    .tool {
        width: 29px;
        height: 28px;
    }

    .sep {
        width: 2px;
        height: 26px;
        margin: 0 2px;
        box-sizing: border-box;
        border-left: 1px solid #20262f;
        border-right: 1px solid #707886;
    }

    .combo {
        position: relative;
        display: flex;
        align-items: center;
        height: 26px;
        box-sizing: border-box;
        padding: 0 24px 0 5px;
        background: #fff;
        color: #111;
    }

    .chevron {
        position: absolute;
        right: 6px;
        top: 10px;
        pointer-events: none;
    }

    .swatch {
        width: 14px;
        height: 14px;
        margin-right: 6px;
        border: 1px solid #444;
    }

    .color .swatch {
        width: 16px;
        height: 16px;
        margin-right: 4px;
    }

    .color {
        padding-left: 4px;
    }

    .vp {
        margin: 0 3px 0 6px;
    }

    .layer .swatch {
        margin-left: 5px;
    }

    .sample {
        height: 1px;
        margin-right: 7px;
        background: #000;
    }

    .style {
        height: 28px;
        padding-left: 24px;
    }

    .plot {
        padding-left: 13px;
        color: #7d7d7d;
    }

    .group-name {
        height: 26px;
        background: #efefef;
        border: 1px solid #fff;
    }

    /* drawing area */
    .canvas {
        position: relative;
        flex: 1;
        min-height: 0;
        overflow: hidden;
        background: #222830;
    }

    .drawing {
        position: absolute;
        inset: 0;
    }

    .view-label {
        position: relative;
        z-index: 1;
        display: flex;
        gap: 2px;
        padding: 6px 4px;
    }

    .ucs {
        font: 300 22px "Open Sans", sans-serif;
        text-anchor: middle;
        fill: #f2f2f2;
    }

    .cube {
        position: absolute;
        top: 16px;
        right: 17px;
        display: flex;
        flex-direction: column;
        align-items: center;
    }

    .face {
        font: 700 13px "Liberation Sans", sans-serif;
        text-anchor: middle;
        fill: #50555c;
    }

    .dir {
        font: 700 25px "Liberation Sans", sans-serif;
        text-anchor: middle;
        fill: #a4a7ab;
    }

    .wcs {
        width: 56px;
        height: 20px;
        margin-top: 23px;
        gap: 6px;
        border-radius: 5px;
        background: #9a9da6;
        color: #72767e;
        font: 700 13px "Liberation Sans", sans-serif;
    }

    /* command line */
    .command {
        position: relative;
        display: flex;
        flex: none;
        height: 75px;
        border: solid #3b4453;
        border-width: 5px 0;
    }

    .handle {
        display: flex;
        flex-direction: column;
        align-items: center;
        width: 31px;
        padding-right: 3px;
        box-sizing: border-box;
        background: #333a46;
        gap: 8px;
    }

    .dots {
        width: 20px;
        height: 6px;
        margin-top: 6px;
        background: repeating-linear-gradient(90deg, transparent 0 2px, #333a46 2px 4px), linear-gradient(#ddd 2px, transparent 2px 4px, #ddd 4px);
    }

    .handle button:last-child {
        margin-top: 6px;
    }

    .lines {
        flex: 1;
        display: flex;
        flex-direction: column;
        padding: 1px 0;
        gap: 1px;
    }

    pre {
        margin: 0;
        height: 47px;
        box-sizing: border-box;
        padding: 8px 3px 0;
        background: #c8c8c8;
        color: #111;
        font: 15px/19px "DejaVu Sans Mono", monospace;
    }

    .prompt {
        flex: 1;
        display: flex;
        align-items: center;
        gap: 2px;
        padding-left: 4px;
        background: #fff;
    }

    .prompt input {
        flex: 1;
        padding-left: 5px;
        color: #111;
        font: 15px/19px "DejaVu Sans Mono", monospace;
        outline: 0;
    }

    .prompt input::placeholder {
        color: #7b8280;
        opacity: 1;
        font-style: italic;
    }

    .watermark {
        position: absolute;
        left: 50%;
        top: -20px;
        width: 240px;
        margin-left: -120px;
        z-index: 2;
        display: flex;
        flex-direction: column;
        align-items: center;
        color: rgba(190, 190, 190, 0.45);
        pointer-events: none;
    }

    .ar {
        font: 700 62px/72px "DejaVu Sans", sans-serif;
    }

    .en {
        font: 600 37px/48px "Inter", sans-serif;
    }

    /* status bar */
    .status-bar {
        height: 38px;
        box-sizing: border-box;
        padding-bottom: 6px;
        border-bottom: 2px solid #000;
    }

    .status-bar > .add {
        width: 48px;
    }

    .layout {
        padding: 0 10px;
    }

    .layout.current {
        height: 30px;
        margin-left: 6px;
        padding: 0 20px 0 22px;
        font-weight: 700;
        background: #3b4453;
        clip-path: polygon(12px 0, 100% 0, calc(100% - 12px) 100%, 0 100%);
    }

    .toggles {
        display: flex;
        gap: 3px;
        align-self: flex-start;
        margin: 2px 0 0 auto;
        padding-right: 2px;
    }

    .cluster {
        display: flex;
        background: #3b4453;
    }

    .cluster button {
        height: 29px;
    }

    .cluster .on {
        background: #5f8dc2;
    }
</style>
